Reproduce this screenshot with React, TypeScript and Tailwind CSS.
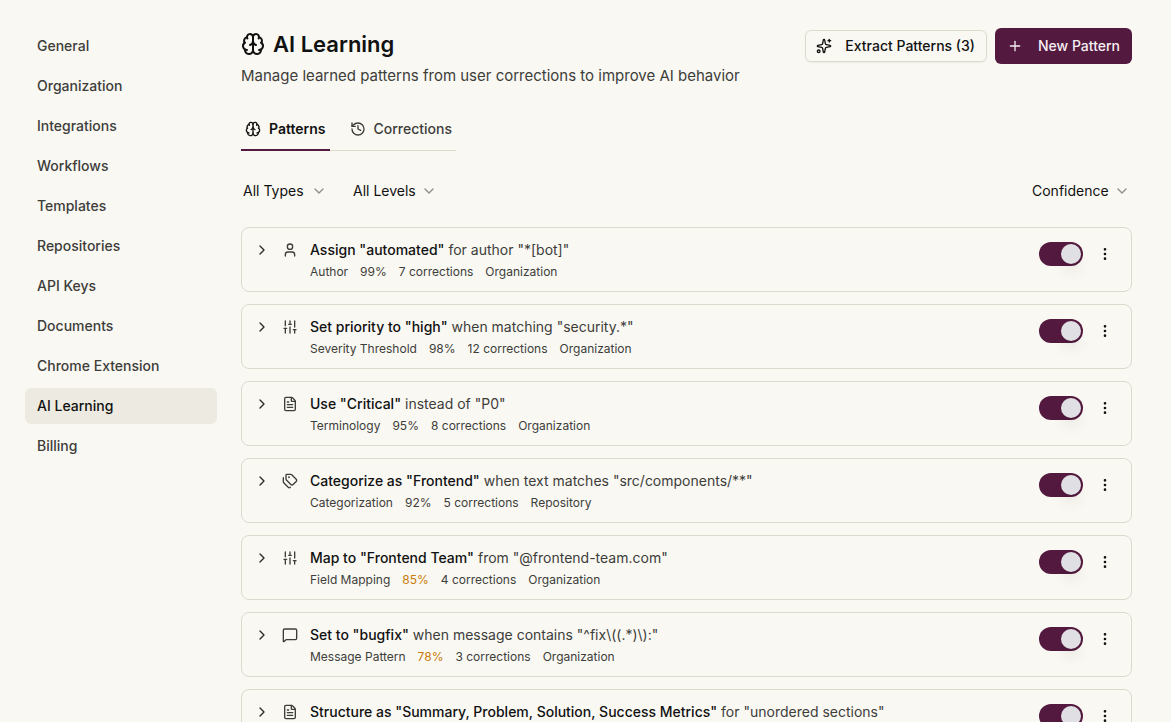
import { useState } from "react";
import {
  Brain,
  ChevronDown,
  ChevronRight,
  EllipsisVertical,
  FileText,
  History,
  Plus,
  SlidersVertical,
  Sparkles,
  Tags,
  User,
} from "lucide-react";

function MessageIcon({ className }: { className?: string }) {
  return (
    <svg viewBox="0 0 24 24" fill="none" stroke="currentColor" strokeWidth="2" strokeLinecap="round" strokeLinejoin="round" className={className} aria-hidden="true">
      <path d="M22 17a2 2 0 0 1-2 2H6.800a2 2 0 0 0-1.400.600l-2.200 2.200A.7.7 0 0 1 2 21.300V5a2 2 0 0 1 2-2h16a2 2 0 0 1 2 2z" />
    </svg>
  );
}

const sections = ["General", "Organization", "Integrations", "Workflows", "Templates", "Repositories", "API Keys", "Documents", "Chrome Extension", "AI Learning", "Billing"];

const patterns = [
  { icon: User, title: 'Assign "automated"', rule: 'for author "*[bot]"', type: "Author", confidence: 99, corrections: 7, level: "Organization" },
  { icon: SlidersVertical, title: 'Set priority to "high"', rule: 'when matching "security.*"', type: "Severity Threshold", confidence: 98, corrections: 12, level: "Organization" },
  { icon: FileText, title: 'Use "Critical"', rule: 'instead of "P0"', type: "Terminology", confidence: 95, corrections: 8, level: "Organization" },
  { icon: Tags, title: 'Categorize as "Frontend"', rule: 'when text matches "src/components/**"', type: "Categorization", confidence: 92, corrections: 5, level: "Repository" },
  { icon: SlidersVertical, title: 'Map to "Frontend Team"', rule: 'from "@frontend-team.com"', type: "Field Mapping", confidence: 85, corrections: 4, level: "Organization" },
  { icon: MessageIcon, title: 'Set to "bugfix"', rule: 'when message contains "^fix\\((.*)\\):"', type: "Message Pattern", confidence: 78, corrections: 3, level: "Organization" },
  { icon: FileText, title: 'Structure as "Summary, Problem, Solution, Success Metrics"', rule: 'for "unordered sections"', type: "Structure", confidence: 75, corrections: 3, level: "Organization" },
];

function Filter({ label, options, className }: { label: string; options: string[]; className: string }) {
  return (
    <div className={`relative flex items-center ${className}`}>
      <select aria-label={label} className="h-9 w-full appearance-none bg-transparent pr-5 pl-0.5 text-sm">
        {options.map((o) => (
          <option key={o}>{o}</option>
        ))}
      </select>
      <ChevronDown className="pointer-events-none absolute right-0.5 size-4 text-[#8f8f8a]" />
    </div>
  );
}

function PatternCard({ pattern }: { pattern: (typeof patterns)[number] }) {
  const [enabled, setEnabled] = useState(true);
  const Icon = pattern.icon;
  return (
    <li className="flex items-start rounded-lg border border-[#dbdbcd] px-3 pt-3 pb-[11px]">
      <button aria-label="Expand pattern" className="mt-0.5 mr-3 shrink-0 text-[#2b2b29]">
        <ChevronRight className="size-4" />
      </button>
      <Icon className="mt-0.5 mr-3 size-4 shrink-0 text-[#3d3d3a]" />
      <div className="min-w-0 flex-1">
        <p className="text-sm text-[#3d3d3a]">
          <span className="font-medium text-[#111]">{pattern.title}</span> {pattern.rule}
        </p>
        <div className="mt-1 flex gap-3 text-xs text-[#3d3d3a]">
          <span>{pattern.type}</span>
          <span className={pattern.confidence < 90 ? "text-[#c97c0a]" : ""}>{pattern.confidence}%</span>
          <span>{pattern.corrections} corrections</span>
          <span>{pattern.level}</span>
        </div>
      </div>
      <div className="flex items-center gap-2">
        <label className="relative flex h-6 w-11 cursor-pointer items-center">
          <input type="checkbox" role="switch" aria-label={pattern.title} checked={enabled} onChange={() => setEnabled(!enabled)} className="peer h-6 w-11 appearance-none rounded-full bg-[#c9c9c0] checked:bg-[#53193f]" />
          <span className="pointer-events-none absolute left-0.5 size-5 rounded-full bg-[#e0dfe3] shadow-lg peer-checked:left-[22px]" />
        </label>
        <button aria-label="Pattern actions" className="flex size-7 items-center justify-center">
          <EllipsisVertical className="size-4" />
        </button>
      </div>
    </li>
  );
}

export default function App() {
  return (
    <div className="flex min-h-screen gap-6 bg-[#f9f8f3] py-7 pr-[39px] pl-[25px] font-[Inter,sans-serif] text-[#111]">
      <nav aria-label="Settings" className="w-48 shrink-0">
        <ul className="flex flex-col gap-1">
          {sections.map((s) => (
            <li key={s}>
              <a href="#" className={`flex h-9 items-center rounded-md px-3 text-sm font-medium ${s === "AI Learning" ? "bg-[#edeae1] text-[#111]" : "text-[#3d3d3a]"}`}>{s}</a>
            </li>
          ))}
        </ul>
      </nav>
      <main className="min-w-0 flex-1">
        <header className="flex items-start justify-between">
          <div>
            <h1 className="flex items-center gap-2 text-[22px] leading-8 font-semibold">
              <Brain className="size-6" />
              AI Learning
            </h1>
            <p className="mt-1 text-[15px] leading-6 text-[#3d3d3a]">Manage learned patterns from user corrections to improve AI behavior</p>
          </div>
          <div className="flex items-center gap-2">
            <button className="flex h-8 items-center gap-[13px] rounded-md border border-[#dbdbcd] pr-[11px] pl-2.5 text-sm font-medium shadow-xs">
              <Sparkles className="size-4" />
              Extract Patterns (3)
            </button>
            <button className="flex h-9 items-center gap-[15px] rounded-md bg-[#53193f] px-3 text-sm font-medium text-[#f6eef3]">
              <Plus className="size-4" />
              New Pattern
            </button>
          </div>
        </header>
        <div role="tablist" className="mt-[22px] flex w-fit border-b border-[#dbdbcd]">
          <button role="tab" aria-selected="true" className="-mb-px flex h-[41px] items-center gap-2 border-b-2 border-[#53193f] px-1 pb-0.5 text-sm font-semibold">
            <Brain className="size-4" />
            Patterns
          </button>
          <button role="tab" aria-selected="false" className="-mb-px flex h-[41px] items-center gap-2 border-b-2 border-transparent pr-1 pb-0.5 pl-5 text-sm font-medium text-[#3d3d3a]">
            <History className="size-4" />
            Corrections
          </button>
        </div>
        <div className="mt-[22px] flex items-center gap-[22px]">
          <Filter label="Pattern type" options={["All Types", "Author", "Terminology"]} className="w-[88px]" />
          <Filter label="Pattern level" options={["All Levels", "Organization", "Repository"]} className="w-[88px]" />
          <Filter label="Sort by" options={["Confidence", "Corrections"]} className="ml-auto w-[102px]" />
        </div>
        <ul className="mt-[18px] flex flex-col gap-3">
          {patterns.map((p) => (
            <PatternCard key={p.title} pattern={p} />
          ))}
        </ul>
      </main>
    </div>
  );
}
